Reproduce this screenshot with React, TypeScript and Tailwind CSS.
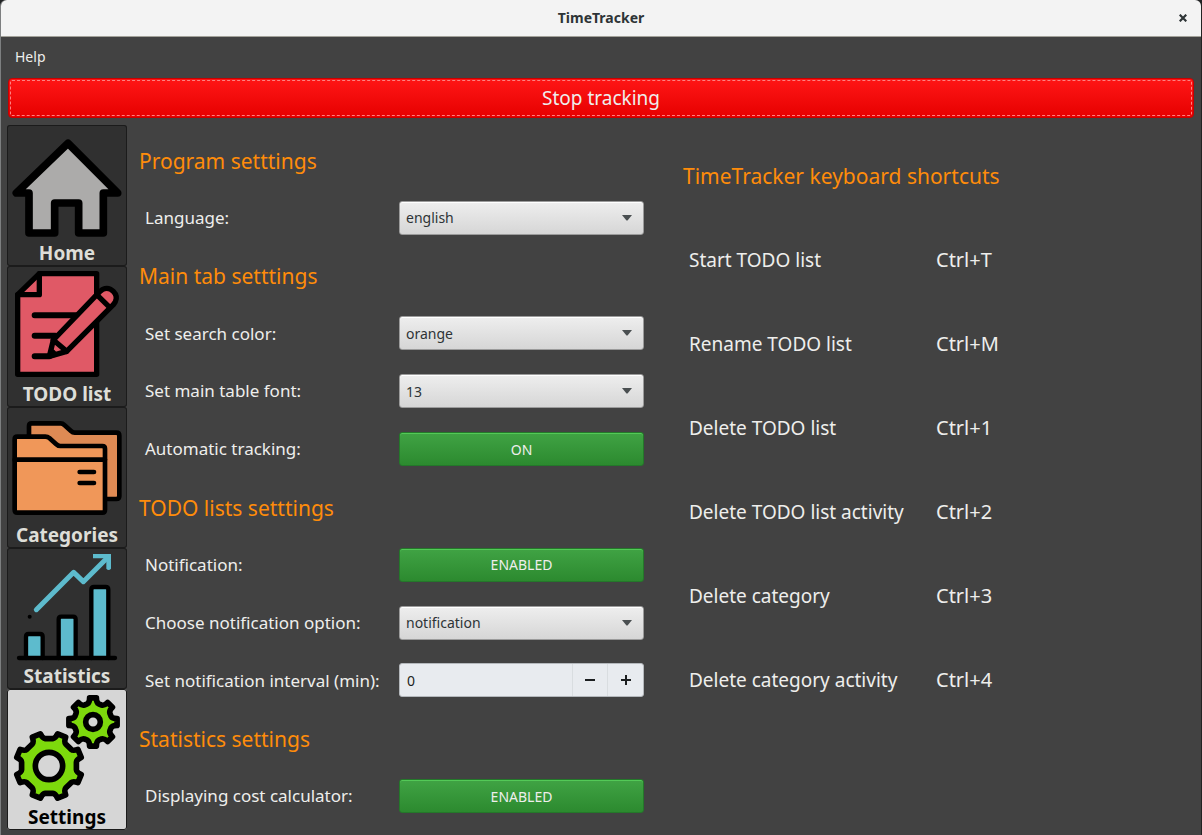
import { useState, type ReactNode } from "react";

function HomeIcon() {
  return (
    <svg viewBox="21 15 360 348" className="block w-full" aria-hidden="true">
      <path
        d="M204 70 L49 219 L87 219 L87 339 L164 339 L164 249 L236 249 L236 339 L310 339 L310 219 L353 219 Z"
        fill="#acabaa"
        stroke="#000"
        strokeWidth="23"
        strokeLinejoin="round"
      />
    </svg>
  );
}

function TodoIcon() {
  return (
    <svg viewBox="21 12 360 348" className="block w-full" aria-hidden="true" stroke="#000" strokeWidth="16" strokeLinejoin="round" strokeLinecap="round">
      <path d="M53 98 L118 35 L290 35 L290 337 L53 337 Z" fill="#e05966" />
      <path d="M118 35 L118 98 L53 98" fill="none" />
      <path d="M104 160 H228 M104 221 H166 M104 283 H148" fill="none" strokeWidth="18" />
      <path d="M300 88 L308 82 Q326 74 340 88 Q354 102 346 119 L340 128 L200 268 L148 283 L160 234 Z" fill="#e05966" />
      <path d="M290 98 L326 133 M160 234 L200 268 M158 270 L164 277" fill="none" />
    </svg>
  );
}

function CategoriesIcon() {
  return (
    <svg viewBox="21 15 360 348" className="block w-full" aria-hidden="true" stroke="#000" strokeWidth="14" strokeLinejoin="round" strokeLinecap="round">
      <path d="M87 105 V72 Q87 64 95 64 H182 Q188 64 193 69 L213 87 Q218 92 224 92 H349 Q358 92 358 101 V282 Q358 291 349 291 H315 Z" fill="#de8a54" />
      <path d="M44 112 Q44 104 52 104 H136 Q143 104 148 108 L168 126 Q174 132 181 132 H307 Q315 132 315 140 V323 Q315 332 307 332 H52 Q44 332 44 323 Z" fill="#f09759" />
      <path d="M44 173 H315 M239 210 H282 M239 243 H282" fill="none" />
    </svg>
  );
}

function StatisticsIcon() {
  return (
    <svg viewBox="21 12 360 348" className="block w-full" aria-hidden="true" strokeLinejoin="round" strokeLinecap="round">
      <g fill="#5dbbcd" stroke="#000" strokeWidth="13">
        <path d="M78 342 V278 Q78 270 86 270 H120 Q128 270 128 278 V342" />
        <path d="M176 342 V226 Q176 218 184 218 H219 Q227 218 227 226 V342" />
        <path d="M274 342 V137 Q274 129 282 129 H317 Q325 129 325 137 V342" />
        <path d="M57 342 H345" />
      </g>
      <circle cx="89" cy="218" r="6" fill="#000" />
      <path d="M109 197 L221 85 L250 113 L322 41" fill="none" stroke="#5dbbcd" strokeWidth="15" />
      <path d="M279 30 H333 V74 Q326 82 319 74 V43 H279 Z" fill="#5dbbcd" />
    </svg>
  );
}

/** Closed outline of an eight-toothed gear, `turn` being the angle of its first tooth in degrees. */
function gearPath(cx: number, cy: number, outer: number, inner: number, turn: number, tip: number, root: number) {
  const at = (r: number, deg: number) => {
    const a = (deg * Math.PI) / 180;
    return `${(cx + r * Math.cos(a)).toFixed(1)} ${(cy + r * Math.sin(a)).toFixed(1)}`;
  };
  let d = "";
  for (let i = 0; i < 8; i++) {
    const a = turn + i * 45;
    d += `${i === 0 ? "M" : "L"}${at(outer, a - tip)} L${at(outer, a + tip)} Q${at(inner + 2, a + tip + 2)} ${at(inner, a + 22.5 - root)} L${at(inner, a + 22.5 + root)} Q${at(inner + 2, a + 43 - tip)} ${at(outer, a + 45 - tip)} `;
  }
  return d + "Z";
}

function SettingsIcon() {
  return (
    <svg viewBox="21 12 360 348" className="block w-full" aria-hidden="true" stroke="#000" strokeWidth="17" strokeLinejoin="round">
      <path d={gearPath(147, 243, 100, 83, 22.5, 7.5, 8)} fill="#7dd90c" />
      <circle cx="147" cy="243" r="41" fill="#d6d6d6" />
      <path d={gearPath(279, 111, 73, 57, 0, 8, 5)} fill="#7dd90c" />
      <circle cx="279" cy="111" r="22" fill="#d6d6d6" />
    </svg>
  );
}

const tabs: { name: string; icon: ReactNode }[] = [
  { name: "Home", icon: <HomeIcon /> },
  { name: "TODO list", icon: <TodoIcon /> },
  { name: "Categories", icon: <CategoriesIcon /> },
  { name: "Statistics", icon: <StatisticsIcon /> },
  { name: "Settings", icon: <SettingsIcon /> },
];

const shortcuts = [
  ["Start TODO list", "Ctrl+T"],
  ["Rename TODO list", "Ctrl+M"],
  ["Delete TODO list", "Ctrl+1"],
  ["Delete TODO list activity", "Ctrl+2"],
  ["Delete category", "Ctrl+3"],
  ["Delete category activity", "Ctrl+4"],
];

function Heading({ children }: { children: ReactNode }) {
  return <h2 className="flex items-center pt-[3px] text-[21px] text-[#ff8c0a]">{children}</h2>;
}

function Row({ id, label, children }: { id: string; label: string; children: ReactNode }) {
  return (
    <div className="flex items-center pl-1.5">
      <label htmlFor={id} className="w-[254px] shrink-0 text-[17px] whitespace-nowrap">
        {label}
      </label>
      <div className="min-w-0 flex-1">{children}</div>
    </div>
  );
}

function Select({ id, value, options }: { id: string; value: string; options: string[] }) {
  return (
    <div className="relative">
      <select
        id={id}
        defaultValue={value}
        className="block h-[34px] w-full appearance-none rounded-[3px] border border-[#9b9b9b] bg-linear-to-b from-[#eeeeee] to-[#d6d6d6] pl-1.5 text-[14px] text-[#2e3436] shadow-[inset_0_1px_0_#ffffff]"
      >
        {options.map((o) => (
          <option key={o}>{o}</option>
        ))}
      </select>
      <svg viewBox="0 0 10 6" className="pointer-events-none absolute top-3.5 right-3 h-1.5 w-2.5" aria-hidden="true">
        <path d="M0 0 H10 L5.5 5.5 H4.5 Z" fill="#4a4f51" />
      </svg>
    </div>
  );
}

function Toggle({ id, on, off }: { id: string; on: string; off: string }) {
  const [active, setActive] = useState(true);
  return (
    <button
      id={id}
      type="button"
      onClick={() => setActive(!active)}
      className="block h-[34px] w-full rounded-[3px] border border-[#24782a] bg-linear-to-b from-[#40a344] to-[#2c8a2f] text-[14px] shadow-[inset_0_1px_0_#53c957]"
    >
      {active ? on : off}
    </button>
  );
}

function Spinner({ id }: { id: string }) {
  const [value, setValue] = useState(0);
  return (
    <div className="flex h-[34px] overflow-hidden rounded-[3px] border border-[#b4b8bc] bg-[#e8ebef] text-[#1c1f20]">
      <input
        id={id}
        inputMode="numeric"
        value={value}
        onChange={(e) => setValue(Number(e.target.value) || 0)}
        className="min-w-0 flex-1 bg-transparent pl-[7px] text-[14px] outline-none"
      />
      <button type="button" aria-label="Decrease" onClick={() => setValue(Math.max(0, value - 1))} className="flex w-[35px] items-center justify-center border-l border-[#d9dde0]">
        <svg viewBox="0 0 10 10" className="size-2.5" aria-hidden="true">
          <path d="M0 5 H10" stroke="#1c1f20" strokeWidth="2" />
        </svg>
      </button>
      <button type="button" aria-label="Increase" onClick={() => setValue(value + 1)} className="flex w-9 items-center justify-center border-l border-[#d9dde0]">
        <svg viewBox="0 0 10 10" className="size-2.5" aria-hidden="true">
          <path d="M0 5 H10 M5 0 V10" stroke="#1c1f20" strokeWidth="2" />
        </svg>
      </button>
    </div>
  );
}

export default function App() {
  const [tab, setTab] = useState("Settings");
  return (
    <div className="min-h-screen bg-[#202224] font-['Noto_Sans','Open_Sans',sans-serif] text-[#eeeeec]">
      <div className="flex min-h-screen flex-col rounded-t-md border-r border-l border-r-[#232323] border-l-[#7d7f80] bg-[#424242]">
        <header className="grid h-[37px] grid-cols-[1fr_auto_1fr] items-center rounded-t-md border-b border-[#a3a29a] bg-[#f3f3f3] px-3.5 pb-px text-[#2e3436]">
          <h1 className="col-start-2 text-[14px] font-bold">TimeTracker</h1>
          <button type="button" aria-label="Close" className="justify-self-end">
            <svg viewBox="0 0 8 8" className="size-2" aria-hidden="true">
              <path d="M0.7 0.7 L7.3 7.3 M7.3 0.7 L0.7 7.3" stroke="#2e3436" strokeWidth="2.2" />
            </svg>
          </button>
        </header>

        <nav className="flex h-[41px] items-center px-3.5 pb-0.5 text-[14px]">
          <button type="button">Help</button>
        </nav>

        <div className="px-[7px]">
          <button
            type="button"
            className="block h-10 w-full rounded-[4px] border border-[#c80000] bg-linear-to-b from-[#ff1515] to-[#e60000] p-px text-[19px]"
          >
            <span className="flex h-full items-center justify-center rounded-[2px] border border-dashed border-[#ff8080]">Stop tracking</span>
          </button>
        </div>

        <main className="flex flex-1 pt-[7px] pl-1.5">
          <div role="tablist" aria-label="Views" className="flex w-[120px] shrink-0 flex-col">
            {tabs.map(({ name, icon }) => (
              <button
                key={name}
                type="button"
                role="tab"
                aria-selected={tab === name}
                onClick={() => setTab(name)}
                className={
                  tab === name
                    ? "h-[141px] rounded-[3px] bg-[#d6d6d6] text-black shadow-[inset_0_0_0_1px_#1b1b1b]"
                    : "h-[141px] rounded-[3px] bg-[#303030] text-[#deded8] shadow-[inset_0_0_0_1px_#1b1b1b]"
                }
              >
                {icon}
                <span className="block h-[25px] text-[19px] leading-6 font-bold">{name}</span>
              </button>
            ))}
          </div>

          <div className="flex min-w-0 flex-1 pl-3">
            <section aria-label="Settings" className="grid w-[505px] shrink-0 auto-rows-fr grid-cols-1 pt-1.5 pb-2.5">
              <Heading>Program setttings</Heading>
              <Row id="language" label="Language:">
                <Select id="language" value="english" options={["english", "polish"]} />
              </Row>
              <Heading>Main tab setttings</Heading>
              <Row id="color" label="Set search color:">
                <Select id="color" value="orange" options={["orange", "red", "green"]} />
              </Row>
              <Row id="font" label="Set main table font:">
                <Select id="font" value="13" options={["12", "13", "14"]} />
              </Row>
              <Row id="auto" label="Automatic tracking:">
                <Toggle id="auto" on="ON" off="OFF" />
              </Row>
              <Heading>TODO lists setttings</Heading>
              <Row id="notify" label="Notification:">
                <Toggle id="notify" on="ENABLED" off="DISABLED" />
              </Row>
              <Row id="option" label="Choose notification option:">
                <Select id="option" value="notification" options={["notification", "sound"]} />
              </Row>
              <Row id="interval" label="Set notification interval (min):">
                <Spinner id="interval" />
              </Row>
              <Heading>Statistics settings</Heading>
              <Row id="cost" label="Displaying cost calculator:">
                <Toggle id="cost" on="ENABLED" off="DISABLED" />
              </Row>
            </section>

            <section className="min-w-0 flex-1 pt-[9px] pl-[39px]">
              <table className="text-left text-[19px]">
                <caption className="h-[84px] text-left text-[21px] leading-[84px] whitespace-nowrap text-[#ff8c0a]">
                  TimeTracker keyboard shortcuts
                </caption>
                <tbody>
                  {shortcuts.map(([action, keys]) => (
                    <tr key={action} className="h-[84px]">
                      <th scope="row" className="w-[253px] pl-1.5 font-normal whitespace-nowrap">
                        {action}
                      </th>
                      <td className="text-[20px]">{keys}</td>
                    </tr>
                  ))}
                </tbody>
              </table>
            </section>
          </div>
        </main>
      </div>
    </div>
  );
}
